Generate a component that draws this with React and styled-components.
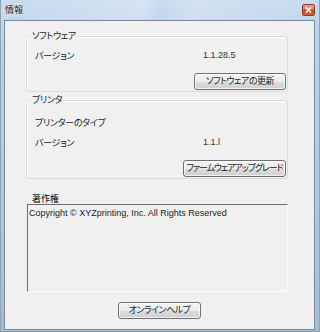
import styled, { createGlobalStyle } from 'styled-components';

const GlobalStyle = createGlobalStyle`
  html, body {
    margin: 0;
    padding: 0;
    background: #ffffff;
  }
  * {
    box-sizing: border-box;
  }
`;

const Window = styled.div`
  width: 320px;
  height: 332px;
  display: flex;
  flex-direction: column;
  padding: 0 5px 2px 4px;
  background: linear-gradient(to bottom, #c8dbef 0px, #bcd2ea 40px, #b2c8df 200px, #a9bccf 332px);
  box-shadow: inset 1px 0 0 #8ea3b8, inset -1px 0 0 #8ea3b8, inset 0 -1px 0 #8398ad;
  font-family: 'Liberation Sans', 'Noto Sans CJK JP', sans-serif;
  font-feature-settings: 'palt';
  color: #1b1b1b;
`;

const TitleBar = styled.div`
  height: 20px;
  display: flex;
  align-items: center;
  justify-content: space-between;
  padding: 0 0 0 1px;
  background: linear-gradient(
    100deg,
    rgba(255, 255, 255, 0) 0%,
    rgba(255, 255, 255, 0.25) 45%,
    rgba(255, 255, 255, 0) 50%,
    rgba(255, 255, 255, 0.2) 60%,
    rgba(255, 255, 255, 0) 100%
  );
`;

const Title = styled.span`
  font-size: 9px;
  line-height: 10px;
  color: #222;
  text-shadow: 0 0 4px rgba(255, 255, 255, 0.9);
`;

const CloseButton = styled.div`
  width: 13px;
  height: 12px;
  margin-bottom: 1px;
  border: 1px solid #8b3b28;
  border-radius: 2px;
  display: flex;
  align-items: center;
  justify-content: center;
  background: linear-gradient(to bottom, #e8a58f 0%, #d8745a 45%, #c44a26 55%, #d0653e 100%);
`;

const Client = styled.div`
  flex: 1;
  display: flex;
  flex-direction: column;
  border: 1px solid #7d8a97;
  background: #f0f0f0;
  padding-top: 15px;
`;

const Sections = styled.div`
  display: flex;
  flex-direction: column;
  margin: 0 26px 0 21px;
`;

const Group = styled.div`
  position: relative;
  margin-top: ${(p) => p.$top || 0}px;
  padding: ${(p) => p.$padTop}px 1px 1px 0;
  border: 1px solid #d9dde1;
  border-radius: 3px;
  box-shadow: inset 1px 1px 0 #ffffff;
  display: flex;
  flex-direction: column;
`;

const Legend = styled.span`
  position: absolute;
  top: -6px;
  left: 4px;
  padding: 0 1px;
  font-size: 9px;
  line-height: 11px;
  letter-spacing: -0.3px;
  background: #f0f0f0;
`;

const Row = styled.div`
  display: grid;
  grid-template-columns: 168px 1fr;
  height: 14px;
  align-items: center;
  padding-left: 8px;
  margin-top: ${(p) => p.$gap || 0}px;
  font-size: 9px;
  letter-spacing: -0.3px;
  white-space: nowrap;
`;

const Value = styled.span`
  color: #333;
  letter-spacing: 0;
`;

const ButtonRow = styled.div`
  display: flex;
  justify-content: ${(p) => (p.$center ? 'center' : 'flex-end')};
  margin-top: ${(p) => p.$gap}px;
`;

const Button = styled.button`
  width: ${(p) => p.$w}px;
  height: 17px;
  padding: 0;
  display: flex;
  align-items: center;
  justify-content: center;
  border: 1px solid #707070;
  border-radius: 3px;
  background: linear-gradient(to bottom, #f3f3f3 0%, #ebebeb 50%, #dddddd 51%, #cfcfcf 100%);
  box-shadow: inset 0 0 0 1px rgba(255, 255, 255, 0.7);
  font-family: inherit;
  font-feature-settings: 'palt';
  font-size: 9px;
  letter-spacing: ${(p) => p.$tight || -0.5}px;
  white-space: nowrap;
  color: #1b1b1b;
  line-height: 15px;
`;

const CopyLabel = styled.div`
  margin: 15px 0 0 6px;
  font-size: 9px;
  line-height: 10px;
  height: 10px;
  color: #000;
`;

const CopyBox = styled.div`
  margin-left: 1px;
  height: 88px;
  padding: 2px 1px;
  border-top: 1px solid #6e6e6e;
  border-left: 1px solid #6e6e6e;
  border-right: 1px solid #fcfcfc;
  border-bottom: 1px solid #fcfcfc;
  font-size: 9px;
  line-height: 13px;
  color: #222;
`;

const Footer = styled.div`
  display: flex;
  justify-content: center;
  margin-top: 10px;
`;

const App = () => {
  return (
    <>
      <GlobalStyle />
      <Window>
        <TitleBar>
          <Title>情報</Title>
          <CloseButton>
            <svg width="7" height="6" viewBox="0 0 7 6">
              <path d="M1 0.5 L6 5.5 M6 0.5 L1 5.5" stroke="#fff" strokeWidth="1.6" />
            </svg>
          </CloseButton>
        </TitleBar>
        <Client>
          <Sections>
            <Group $padTop={11}>
              <Legend>ソフトウェア</Legend>
              <Row>
                <span>バージョン</span>
                <Value>1.1.28.5</Value>
              </Row>
              <ButtonRow $gap={11}>
                <Button $w={92}>ソフトウェアの更新</Button>
              </ButtonRow>
            </Group>
            <Group $top={8} $padTop={14}>
              <Legend>プリンタ</Legend>
              <Row>
                <span>プリンターのタイプ</span>
                <Value></Value>
              </Row>
              <Row $gap={6}>
                <span>バージョン</span>
                <Value>1.1.l</Value>
              </Row>
              <ButtonRow $gap={11}>
                <Button $w={103} $tight={-1.1}>ファームウェアアップグレード</Button>
              </ButtonRow>
            </Group>
            <CopyLabel>著作権</CopyLabel>
            <CopyBox>Copyright © XYZprinting, Inc. All Rights Reserved</CopyBox>
          </Sections>
          <Footer>
            <Button $w={83}>オンラインヘルプ</Button>
          </Footer>
        </Client>
      </Window>
    </>
  );
};

export default App;
